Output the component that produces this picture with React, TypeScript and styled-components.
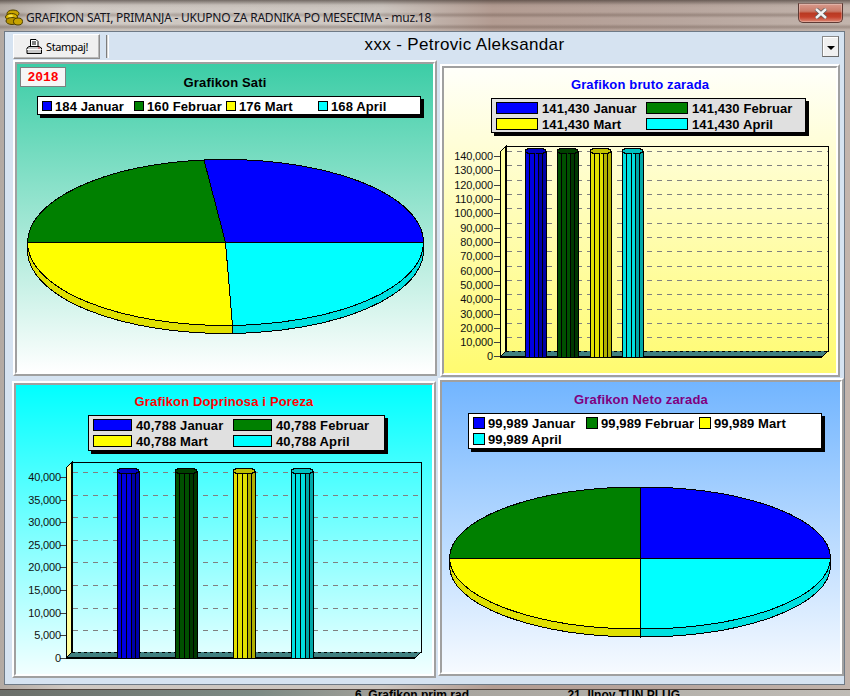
import React from 'react'
import styled, { createGlobalStyle } from 'styled-components'

const GlobalStyle = createGlobalStyle`
  html, body { margin: 0; padding: 0; background: #7d7a75; }
  * { box-sizing: border-box; }
`

// =============================================================================
// WINDOW CHROME
// =============================================================================

const Screen = styled.div`
  width: 850px;
  height: 696px;
  overflow: hidden;
  font-family: 'Liberation Sans', Arial, sans-serif;
  background: #77736c;
`

const Frame = styled.div`
  width: 850px;
  height: 690px;
  padding: 0 5px 0 4px;
  background:
    linear-gradient(180deg, rgba(40, 30, 25, 0.55) 0, rgba(40, 30, 25, 0.05) 5px, transparent 8px),
    linear-gradient(180deg, transparent 12px, rgba(70, 50, 40, 0.28) 15px, transparent 18px, transparent 24px, rgba(70, 50, 40, 0.28) 27px, transparent 30px),
    linear-gradient(90deg, #b3aaa3 0, #cfc8c2 8%, #cbc4be 45%, #b39c92 58%, #b8a69e 80%, #c2b4ac 100%);
  border-bottom: 1px solid #50443e;
`

const TitleBar = styled.div`
  height: 31px;
  display: flex;
  align-items: flex-start;
`

const AppIcon = styled.svg`
  width: 18px;
  height: 18px;
  margin: 9px 0 0 1px;
  flex: none;
`

const TitleText = styled.div`
  margin: 9px 0 0 3px;
  font-family: 'Noto Sans', sans-serif;
  font-size: 12px;
  line-height: 17px;
  color: #14141c;
  white-space: nowrap;
  letter-spacing: -0.23px;
  text-shadow: 0 0 6px rgba(255, 255, 255, 0.7);
`

const CloseButton = styled.div`
  width: 45px;
  height: 20px;
  margin: 3px 2px 0 auto;
  display: flex;
  align-items: center;
  justify-content: center;
  border: 1px solid #5e3a34;
  border-top: 1px solid #8a6a62;
  border-radius: 0 0 5px 5px;
  background: linear-gradient(180deg, #d89a8c 0, #c97a68 40%, #b93a22 52%, #c4402a 72%, #dd8a76 100%);
  box-shadow: inset 0 0 0 1px rgba(255, 255, 255, 0.25);
`

const Client = styled.div`
  width: 841px;
  height: 654px;
  border: 1px solid #6f7a86;
  background: #d6e3f1;
`

const UnderStrip = styled.div`
  height: 6px;
  overflow: hidden;
  position: relative;
  font-size: 12px;
  font-weight: 700;
  line-height: 10px;
  color: #000;
  white-space: nowrap;
  display: flex;
  padding-left: 355px;
  gap: 95px;
  background: linear-gradient(90deg, #6b6f6a 0, #7c8a84 30%, #a3a09a 45%, #c0bcb6 100%);
`

// =============================================================================
// TOOLBAR
// =============================================================================

const Toolbar = styled.div`
  height: 28px;
  padding: 2px 5px 0 8px;
  display: flex;
  align-items: flex-start;
`

const PrintButton = styled.div`
  width: 87px;
  height: 25px;
  display: flex;
  align-items: center;
  gap: 4px;
  padding-left: 12px;
  background: #f0f0f0;
  border: 1px solid;
  border-color: #fff #8e8e8e #8e8e8e #fff;
  box-shadow: inset -1px -1px 0 #b8b8b8;
  font-family: 'Noto Sans', sans-serif;
  font-size: 11px;
  letter-spacing: -0.4px;
  color: #000;
`

const Separator = styled.div`
  width: 3px;
  height: 23px;
  margin: 1px 0 0 6px;
  background: #d8d8d8;
  border-left: 1px solid #7d7d7d;
  border-right: 1px solid #fff;
`

const WorkerName = styled.div`
  flex: 1;
  text-align: center;
  font-size: 17px;
  line-height: 22px;
  letter-spacing: 0.36px;
  color: #000;
`

const DropButton = styled.div`
  width: 17px;
  height: 21px;
  margin: 2px 0 0 2px;
  display: flex;
  align-items: center;
  justify-content: center;
  background: #f0f0f0;
  border: 1px solid;
  border-color: #8a8a8a #6a6a6a #6a6a6a #8a8a8a;
  box-shadow: inset 1px 1px 0 #fff;
  &::after {
    content: '';
    margin-top: 3px;
    border-left: 4px solid transparent;
    border-right: 4px solid transparent;
    border-top: 4px solid #000;
  }
`

// =============================================================================
// CHART PANELS
// =============================================================================

const PanelRow = styled.div<{ $left: number; $height: number }>`
  display: flex;
  align-items: flex-start;
  padding-left: ${({ $left }) => $left}px;
  height: ${({ $height }) => $height}px;
`

const PanelOuter = styled.div<{ $w: number; $h: number; $mt: number; $ml: number }>`
  width: ${({ $w }) => $w}px;
  height: ${({ $h }) => $h}px;
  margin: ${({ $mt }) => $mt}px 0 0 ${({ $ml }) => $ml}px;
  border: 2px solid;
  border-color: #fff #a0a0a0 #a0a0a0 #fff;
`

const PanelInner = styled.div`
  width: 100%;
  height: 100%;
  border: 2px solid;
  border-color: #a0a0a0 #fff #fff #a0a0a0;
`

const PanelFill = styled.div<{ $from: string; $to: string; $pad: number }>`
  position: relative;
  width: 100%;
  height: 100%;
  padding-top: ${({ $pad }) => $pad}px;
  display: flex;
  flex-direction: column;
  background: linear-gradient(180deg, ${({ $from }) => $from}, ${({ $to }) => $to});
`

const YearBadge = styled.div`
  position: absolute;
  left: 3px;
  top: 3px;
  width: 46px;
  height: 20px;
  border: 1px solid #808080;
  background: #f6f6f6;
  color: #f00;
  font-family: 'Liberation Mono', monospace;
  font-size: 13px;
  font-weight: 700;
  line-height: 20px;
  text-align: center;
`

const ChartTitle = styled.div<{ $color: string }>`
  height: 16px;
  line-height: 18px;
  font-size: 13px;
  font-weight: 700;
  letter-spacing: 0.15px;
  text-align: center;
  color: ${({ $color }) => $color};
`

const Legend = styled.div<{ $ml: number; $w: number; $h: number; $bg: string; $col: number; $pl: number }>`
  flex: none;
  margin: 6px 0 0 ${({ $ml }) => $ml}px;
  width: ${({ $w }) => $w}px;
  height: ${({ $h }) => $h}px;
  padding: 1px 0 0 ${({ $pl }) => $pl}px;
  display: grid;
  grid-template-columns: repeat(auto-fill, ${({ $col }) => $col}px);
  grid-auto-rows: 16px;
  border: 1px solid #000;
  background: ${({ $bg }) => $bg};
  box-shadow: 3px 3px 0 #000;
`

const LegendItem = styled.div<{ $gap: number }>`
  display: flex;
  align-items: center;
  gap: ${({ $gap }) => $gap}px;
  font-size: 13px;
  font-weight: 700;
  line-height: 16px;
  letter-spacing: 0.1px;
  white-space: nowrap;
  color: #000;
`

const LegendText = styled.span`
  margin-top: 2px;
`

const Swatch = styled.span<{ $w: number; $h: number; $color: string }>`
  flex: none;
  width: ${({ $w }) => $w}px;
  height: ${({ $h }) => $h}px;
  border: 1px solid #000;
  background: ${({ $color }) => $color};
`

const ChartSvg = styled.svg`
  display: block;
  flex: none;
  shape-rendering: crispEdges;
`

const AxisLabel = styled.text`
  font-family: 'Liberation Sans', Arial, sans-serif;
  font-size: 11px;
  letter-spacing: -0.15px;
  fill: #101010;
  text-anchor: end;
  shape-rendering: auto;
`

// =============================================================================
// DATA
// =============================================================================

const MONTHS = ['Januar', 'Februar', 'Mart', 'April']
const COLORS = ['#0000ff', '#008000', '#ffff00', '#00ffff']

const BAR_SHADES = [
  { main: '#0000e0', dark: '#0000a8', top: '#0000c0' },
  { main: '#005000', dark: '#003800', top: '#004000' },
  { main: '#e0e000', dark: '#b0b000', top: '#c0c000' },
  { main: '#00e0e0', dark: '#00a8a8', top: '#00c0c0' },
]

interface Box {
  x: number
  y: number
  w: number
  h: number
}

interface PieSpec {
  cx: number
  cy: number
  rx: number
  ry: number
  depth: number
  topX: number
  bottomX: number
}

function PieChart({ box, spec }: { box: Box; spec: PieSpec }) {
  const { cx, cy, rx, ry, depth, topX, bottomX } = spec
  const yAt = (x: number) => ry * Math.sqrt(1 - ((x - cx) / rx) ** 2)
  const top = [topX, cy - yAt(topX)]
  const bottom = [bottomX, cy + yAt(bottomX)]
  const left = cx - rx
  const right = cx + rx
  const arc = `A ${rx} ${ry} 0 0 1`
  const back = `A ${rx} ${ry} 0 0 0`
  return (
    <ChartSvg width={box.w} height={box.h} viewBox={`${box.x} ${box.y} ${box.w} ${box.h}`}>
      <g stroke="#000" strokeWidth="1">
        <path
          d={`M ${right} ${cy} L ${right} ${cy + depth} ${arc} ${bottom[0]} ${bottom[1] + depth} L ${bottom[0]} ${bottom[1]} ${back} ${right} ${cy} Z`}
          fill="#00e0e0"
        />
        <path
          d={`M ${bottom[0]} ${bottom[1]} L ${bottom[0]} ${bottom[1] + depth} ${arc} ${left} ${cy + depth} L ${left} ${cy} ${back} ${bottom[0]} ${bottom[1]} Z`}
          fill="#e0e000"
        />
        <path d={`M ${cx} ${cy} L ${top[0]} ${top[1]} ${arc} ${right} ${cy} Z`} fill={COLORS[0]} />
        <path d={`M ${cx} ${cy} L ${right} ${cy} ${arc} ${bottom[0]} ${bottom[1]} Z`} fill={COLORS[3]} />
        <path d={`M ${cx} ${cy} L ${bottom[0]} ${bottom[1]} ${arc} ${left} ${cy} Z`} fill={COLORS[2]} />
        <path d={`M ${cx} ${cy} L ${left} ${cy} ${arc} ${top[0]} ${top[1]} Z`} fill={COLORS[1]} />
      </g>
    </ChartSvg>
  )
}

function Cylinder({ x, w, top, bottom, index }: { x: number; w: number; top: number; bottom: number; index: number }) {
  const shade = BAR_SHADES[index]
  const stops = [0, 0.2, 0.42, 0.64, 0.82, 1].map((p) => Math.round(x + p * w))
  return (
    <g>
      {stops.slice(0, -1).map((sx, i) => (
        <rect
          key={sx}
          x={sx}
          y={top + 2}
          width={stops[i + 1] - sx}
          height={bottom - top - 2}
          fill={i > 2 ? shade.dark : shade.main}
          stroke="#000"
          strokeWidth="1"
        />
      ))}
      <ellipse cx={x + w / 2} cy={top + 2} rx={w / 2} ry={3} fill={shade.top} stroke="#000" strokeWidth="1" />
      <rect x={x} y={bottom} width={w} height={1} fill="#000" />
    </g>
  )
}

interface BarSpec {
  wallLeft: number
  wallRight: number
  wallTop: number
  wallBottom: number
  depth: number
  labelX: number
  firstY: number
  stepY: number
  labels: string[]
  bars: number[]
  barW: number
  barTop: number
}

function BarChart({ box, spec }: { box: Box; spec: BarSpec }) {
  const { wallLeft: l, wallRight: r, wallTop: t, wallBottom: b, depth: d } = spec
  return (
    <ChartSvg width={box.w} height={box.h} viewBox={`${box.x} ${box.y} ${box.w} ${box.h}`}>
      <polygon points={`${l},${t} ${l - d},${t + d} ${l - d},${b + d} ${l},${b}`} fill="#ffffa0" stroke="#000" />
      <line x1={l - 0.5} y1={t} x2={l - 0.5} y2={b} stroke="#000" strokeWidth="2" />
      <rect x={l} y={t} width={r - l} height={b - t} fill="none" stroke="#000" />
      <polygon points={`${l},${b} ${r},${b} ${r - d},${b + d} ${l - d},${b + d}`} fill="#408080" />
      <line x1={l} y1={b} x2={r} y2={b} stroke="#000" strokeDasharray="3 3" />
      <line x1={l - d} y1={b + d} x2={r - d} y2={b + d} stroke="#000" strokeWidth="2" />
      <line x1={r} y1={b} x2={r - d} y2={b + d} stroke="#000" />
      {spec.labels.map((label, i) => {
        const y = spec.firstY + i * spec.stepY
        return (
          <g key={label}>
            {i < spec.labels.length - 1 && (
              <line x1={l + 1} y1={Math.round(y - 5)} x2={r} y2={Math.round(y - 5)} stroke="#808080" strokeDasharray="5 5" />
            )}
            <line x1={l - d - 6} y1={Math.round(y)} x2={l - d} y2={Math.round(y)} stroke="#404040" />
            <AxisLabel x={spec.labelX} y={y + 4}>
              {label}
            </AxisLabel>
          </g>
        )
      })}
      {spec.bars.map((x, i) => (
        <Cylinder key={x} x={x} w={spec.barW} top={spec.barTop} bottom={b + d} index={i} />
      ))}
    </ChartSvg>
  )
}

function LegendRows({ values, w, h, gap }: { values: string[]; w: number; h: number; gap: number }) {
  return (
    <>
      {values.map((value, i) => (
        <LegendItem key={MONTHS[i]} $gap={gap}>
          <Swatch $w={w} $h={h} $color={COLORS[i]} />
          <LegendText>
            {value} {MONTHS[i]}
          </LegendText>
        </LegendItem>
      ))}
    </>
  )
}

const labelsFrom = (max: number, step: number) => {
  const out: string[] = []
  for (let v = max; v >= 0; v -= step) out.push(v.toLocaleString('en-US'))
  return out
}

const bruto: BarSpec = {
  wallLeft: 506,
  wallRight: 828,
  wallTop: 146,
  wallBottom: 351,
  depth: 6,
  labelX: 493,
  firstY: 156,
  stepY: 14.32,
  labels: labelsFrom(140000, 10000),
  bars: [525, 557, 590, 622],
  barW: 21,
  barTop: 149,
}

const doprinosi: BarSpec = {
  wallLeft: 72,
  wallRight: 421,
  wallTop: 462,
  wallBottom: 652,
  depth: 6,
  labelX: 61,
  firstY: 477,
  stepY: 22.6,
  labels: labelsFrom(40000, 5000),
  bars: [117, 175, 233, 291],
  barW: 22,
  barTop: 469,
}

// =============================================================================
// PAGE
// =============================================================================

export default function App() {
  return (
    <Screen>
      <GlobalStyle />
      <Frame>
        <TitleBar>
          <AppIcon viewBox="0 0 18 18">
            <ellipse cx="8" cy="4.5" rx="6" ry="3.5" fill="#c8a400" stroke="#4a3c00" />
            <ellipse cx="6.5" cy="8" rx="6" ry="3.5" fill="#d8b400" stroke="#4a3c00" />
            <ellipse cx="7" cy="12" rx="6" ry="3.5" fill="#b89400" stroke="#4a3c00" />
            <ellipse cx="13" cy="12.5" rx="4.5" ry="3.5" fill="#c8a400" stroke="#4a3c00" />
            <ellipse cx="5.5" cy="7" rx="2.5" ry="1.2" fill="#f4e050" />
          </AppIcon>
          <TitleText>GRAFIKON SATI, PRIMANJA - UKUPNO ZA RADNIKA PO MESECIMA - muz.18</TitleText>
          <CloseButton>
            <svg width="14" height="11" viewBox="0 0 14 11">
              <path d="M2 1 L12 10 M12 1 L2 10" stroke="#5b5b5b" strokeWidth="4" />
              <path d="M2 1 L12 10 M12 1 L2 10" stroke="#f2f2f2" strokeWidth="2.4" />
            </svg>
          </CloseButton>
        </TitleBar>
        <Client>
          <Toolbar>
            <PrintButton>
              <svg width="16" height="16" viewBox="0 0 16 16">
                <path d="M4.5 0.5 H10 L12 2.5 V8.5 H4.5 Z" fill="#fff" stroke="#000" />
                <path d="M6 3 H10 M6 5 H10" stroke="#000" />
                <path d="M1 9 L3 7.5 H13 L15.5 9 V14.5 H1 Z" fill="#c8c8c8" stroke="#000" />
                <path d="M1 10.5 H15.5" stroke="#fff" />
                <path d="M12 9 H14" stroke="#c04040" />
              </svg>
              Stampaj!
            </PrintButton>
            <Separator />
            <WorkerName>xxx - Petrovic Aleksandar</WorkerName>
            <DropButton />
          </Toolbar>

          <PanelRow $left={8} $height={318}>
            <PanelOuter $w={424} $h={316} $mt={0} $ml={0}>
              <PanelInner>
                <PanelFill $from="#3ccda6" $to="#ffffff" $pad={10}>
                  <YearBadge>2018</YearBadge>
                  <ChartTitle $color="#000">Grafikon Sati</ChartTitle>
                  <Legend $ml={20} $w={384} $h={19} $bg="#fff" $col={92} $pl={4}>
                    <LegendRows values={['184', '160', '176', '168']} w={10} h={10} gap={3} />
                  </Legend>
                  <PieChart
                    box={{ x: 17, y: 115, w: 416, h: 257 }}
                    spec={{ cx: 225.5, cy: 242.5, rx: 198, ry: 83, depth: 8, topX: 204, bottomX: 232.5 }}
                  />
                </PanelFill>
              </PanelInner>
            </PanelOuter>
            <PanelOuter $w={400} $h={313} $mt={4} $ml={3}>
              <PanelInner>
                <PanelFill $from="#fffffa" $to="#fffb70" $pad={8}>
                  <ChartTitle $color="#0000ff">Grafikon bruto zarada</ChartTitle>
                  <Legend $ml={47} $w={315} $h={35} $bg="#e0e0e0" $col={150} $pl={4}>
                    <LegendRows values={['141,430', '141,430', '141,430', '141,430']} w={42} h={12} gap={4} />
                  </Legend>
                  <BarChart box={{ x: 444, y: 133, w: 392, h: 240 }} spec={bruto} />
                </PanelFill>
              </PanelInner>
            </PanelOuter>
          </PanelRow>

          <PanelRow $left={7} $height={300}>
            <PanelOuter $w={424} $h={297} $mt={3} $ml={0}>
              <PanelInner>
                <PanelFill $from="#00ffff" $to="#f2ffff" $pad={8}>
                  <ChartTitle $color="#ff0000">Grafikon Doprinosa i Poreza</ChartTitle>
                  <Legend $ml={72} $w={297} $h={36} $bg="#e0e0e0" $col={140} $pl={4}>
                    <LegendRows values={['40,788', '40,788', '40,788', '40,788']} w={39} h={12} gap={4} />
                  </Legend>
                  <BarChart box={{ x: 16, y: 451, w: 416, h: 223 }} spec={doprinosi} />
                </PanelFill>
              </PanelInner>
            </PanelOuter>
            <PanelOuter $w={407} $h={298} $mt={0} $ml={2}>
              <PanelInner>
                <PanelFill $from="#72b5ff" $to="#f6faff" $pad={9}>
                  <ChartTitle $color="#800080">Grafikon Neto zarada</ChartTitle>
                  <Legend $ml={26} $w={354} $h={36} $bg="#fff" $col={113} $pl={4}>
                    <LegendRows values={['99,989', '99,989', '99,989', '99,989']} w={12} h={12} gap={3} />
                  </Legend>
                  <PieChart
                    box={{ x: 442, y: 449, w: 397, h: 225 }}
                    spec={{ cx: 640, cy: 558, rx: 190.5, ry: 71, depth: 8, topX: 640, bottomX: 640 }}
                  />
                </PanelFill>
              </PanelInner>
            </PanelOuter>
          </PanelRow>
        </Client>
      </Frame>
      <UnderStrip>
        <span>6. Grafikon prim.rad.</span>
        <span>21. Ilnov TUN PLUG</span>
      </UnderStrip>
    </Screen>
  )
}
